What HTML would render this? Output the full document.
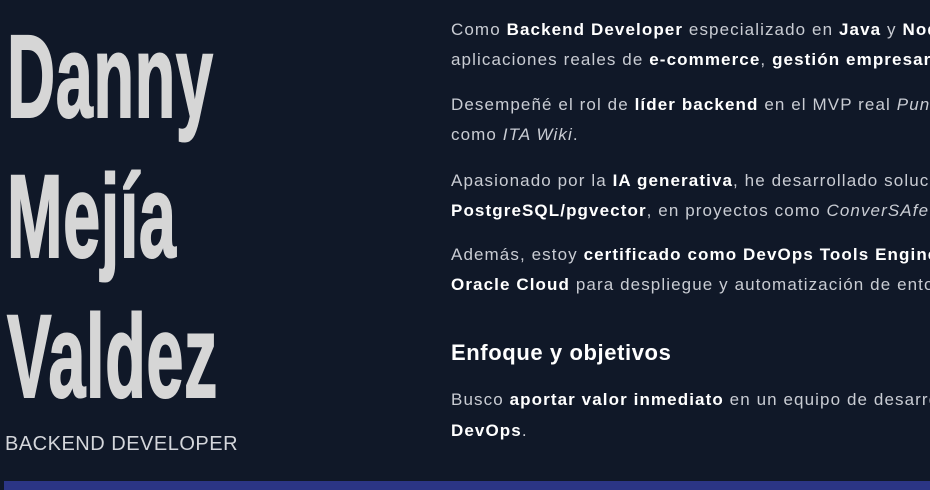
<!DOCTYPE html><html><head><meta charset="utf-8"><style>
html,body{margin:0;width:930px;height:490px;overflow:hidden;background:#101828;}
body{position:relative;font-family:"Liberation Sans",sans-serif;color:#c9ccd3;}
.n{position:absolute;left:7px;font-size:118px;font-weight:bold;color:#d6d6d6;transform:scaleX(0.565);transform-origin:0 0;line-height:1;white-space:nowrap;letter-spacing:1px;-webkit-text-stroke:2px #d6d6d6}
.l{position:absolute;left:451px;font-size:17px;white-space:nowrap;letter-spacing:1.1px;line-height:20px}
.l b{color:#fff}
.h{position:absolute;left:451px;top:340px;font-size:22px;font-weight:bold;color:#fff;letter-spacing:0.6px;white-space:nowrap}
.sub{position:absolute;left:5px;top:433px;font-size:20px;color:#d4d6db;letter-spacing:0.5px}
.bar{position:absolute;left:4px;top:481px;width:926px;height:9px;background:#2b3585}
</style></head><body>
<div class="n" style="top:18px">Danny</div>
<div class="n" style="top:158px">Mejía</div>
<div class="n" style="top:298px">Valdez</div>
<div class="sub">BACKEND DEVELOPER</div>
<div class="l" style="top:20px">Como <b>Backend Developer</b> especializado en <b>Java</b> y <b>Node.js</b></div>
<div class="l" style="top:50px">aplicaciones reales de <b>e-commerce</b>, <b>gestión empresarial</b></div>
<div class="l" style="top:95px">Desempeñé el rol de <b>líder backend</b> en el MVP real <i>Punto</i></div>
<div class="l" style="top:125px">como <i>ITA Wiki</i>.</div>
<div class="l" style="top:171px">Apasionado por la <b>IA generativa</b>, he desarrollado soluciones</div>
<div class="l" style="top:201px"><b>PostgreSQL/pgvector</b>, en proyectos como <i>ConverSAfe-</i></div>
<div class="l" style="top:245px">Además, estoy <b>certificado como DevOps Tools Engineer</b></div>
<div class="l" style="top:275px"><b>Oracle Cloud</b> para despliegue y automatización de entornos</div>
<div class="h">Enfoque y objetivos</div>
<div class="l" style="top:390px">Busco <b>aportar valor inmediato</b> en un equipo de desarrollo</div>
<div class="l" style="top:421px"><b>DevOps</b>.</div>
<div class="bar"></div>
</body></html>
